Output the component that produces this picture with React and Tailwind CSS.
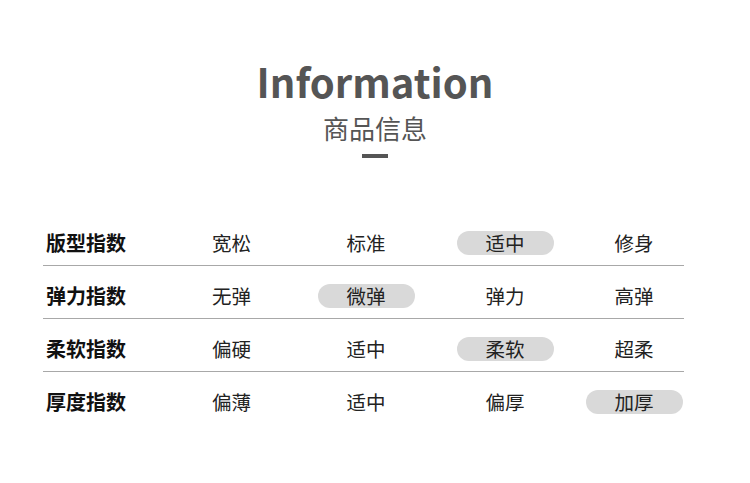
import React from "react";

const rows = [
  { label: "版型指数", options: ["宽松", "标准", "适中", "修身"], active: 2 },
  { label: "弹力指数", options: ["无弹", "微弹", "弹力", "高弹"], active: 1 },
  { label: "柔软指数", options: ["偏硬", "适中", "柔软", "超柔"], active: 2 },
  { label: "厚度指数", options: ["偏薄", "适中", "偏厚", "加厚"], active: 3 },
];

function App() {
  return (
    <div
      className="w-[750px] h-[483px] bg-white overflow-hidden"
      style={{ fontFamily: '"Noto Sans CJK SC", "Noto Sans", sans-serif' }}
    >
      {/* Header */}
      <div className="flex flex-col items-center pt-[58px]">
        <h1 className="text-[40px] font-bold leading-[46px] text-[#555555]">
          Information
        </h1>
        <p className="text-[26px] leading-[30px] mt-[9px] text-[#555555]">商品信息</p>
        <div className="w-[26px] h-[4px] bg-[#555555] mt-[11px]" />
      </div>

      {/* Table */}
      <div className="ml-[43px] mt-[55px] w-[641px]">
        {rows.map((row, i) => (
          <div
            key={row.label}
            className={`pt-[18px] pb-[10px] ${i < rows.length - 1 ? "border-b border-[#a8a8a8]" : ""}`}
          >
            <div className="grid grid-cols-[122px_133px_136px_142px_116px] items-center h-[24px]">
              <div className="pl-[3px] text-[20px] font-bold text-[#111111] leading-none">
                {row.label}
              </div>
              {row.options.map((opt, j) => (
                <div key={opt + j} className="flex justify-center">
                  <span
                    className={`flex items-center justify-center h-[24px] w-[97px] rounded-full text-[19.5px] leading-none text-[#222222] ${
                      j === row.active ? "bg-[#d9d9d9]" : ""
                    }`}
                  >
                    {opt}
                  </span>
                </div>
              ))}
            </div>
          </div>
        ))}
      </div>
    </div>
  );
}

export default App;
